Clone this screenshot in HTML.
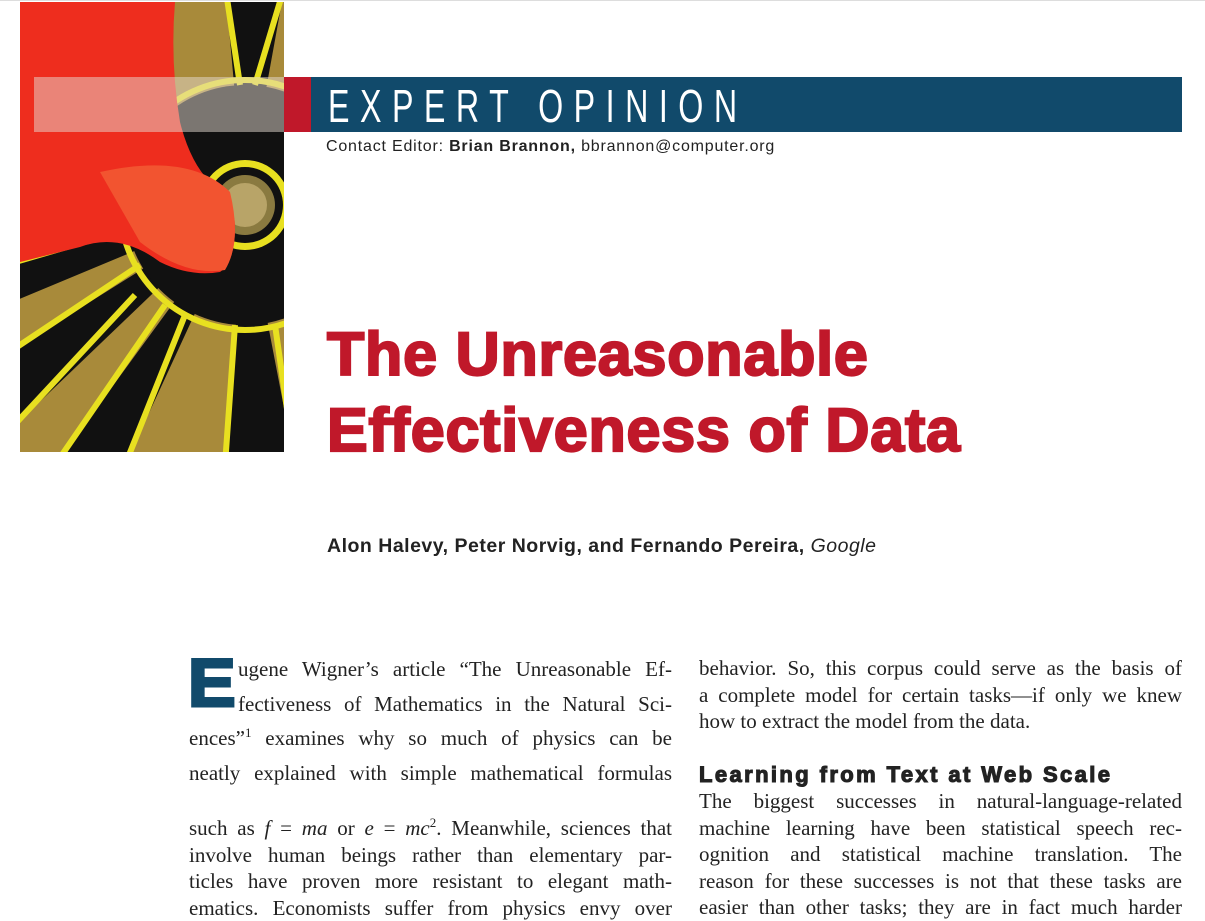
<!DOCTYPE html>
<html><head><meta charset="utf-8"><style>
body{margin:0;width:1205px;height:903px;overflow:hidden;background:#fff;position:relative;font-family:"Liberation Serif",serif;}
.abs{position:absolute}
.topline{left:0;top:0;width:1205px;height:1px;background:#ddd}
.bar{left:311px;top:77px;width:871px;height:55px;background:#114a6b}
.bartxt{left:328px;top:77px;color:#fff;font-family:"Liberation Sans",sans-serif;font-size:46px;letter-spacing:15px;line-height:58px;transform:scaleX(0.7);transform-origin:0 0;white-space:nowrap}
.red{left:284px;top:77px;width:27px;height:55px;background:#c0182a}
.glass{left:34px;top:77px;width:250px;height:55px;background:rgba(230,220,210,.5)}
.contact{left:326px;top:138px;font-family:"Liberation Sans",sans-serif;font-size:16px;letter-spacing:0.8px;color:#222}
.title{left:327px;top:316px;font-family:"Liberation Sans",sans-serif;font-weight:900;font-size:61px;line-height:76px;color:#c0182a;-webkit-text-stroke:2.2px #c0182a;letter-spacing:0.8px;white-space:nowrap}
.auth{left:327px;top:535px;font-family:"Liberation Sans",sans-serif;font-size:19.5px;letter-spacing:0.5px;font-weight:bold;color:#222}
.col{font-size:21px;color:#222;line-height:34.5px;width:483px;text-align:justify}
.col div{white-space:nowrap;text-align:justify;text-align-last:justify}
h3{font-family:"Liberation Sans",sans-serif;font-weight:900;font-size:22px;letter-spacing:2.4px;margin:0;color:#222;-webkit-text-stroke:1.1px #222}
</style></head><body>
<div class="abs topline"></div>
<svg class="abs" style="left:20px;top:2px" width="264" height="450" viewBox="0 0 264 450">
<defs><clipPath id="c"><rect width="264" height="450"/></clipPath></defs>
<g clip-path="url(#c)">
<rect width="264" height="450" fill="#a88a3a"/>
<g transform="translate(225,203)">
<path d="M0 0 L-20 -220 L40 -220 Z" fill="#111"/>
<path d="M0 0 L120 -150 L140 -60 Z" fill="#111"/>
<path d="M0 0 L-240 150 L-240 230 Z" fill="#111"/>
<path d="M0 0 L-190 260 L-120 260 Z" fill="#111"/>
<path d="M0 0 L-20 260 L50 260 Z" fill="#111"/>
<path d="M0 0 L-240 60 L-240 100 Z" fill="#111"/>
<circle r="125" fill="none" stroke="#e8e020" stroke-width="6"/>
<circle r="120" fill="#111"/>
<circle r="45" fill="#e8e020"/>
<circle r="38" fill="#111"/>
<path d="M-20 -220 L-5 -120 M40 -220 L10 -120 M120 -150 L80 -90 M140 -60 L110 -50 M-240 150 L-105 60 M-240 230 L-110 90 M-190 260 L-80 100 M-120 260 L-60 110 M-20 260 L-10 120 M50 260 L30 120 M-240 60 L-120 25" stroke="#e8e020" stroke-width="6" fill="none"/>
<circle r="30" fill="#8a7a40"/>
<circle r="22" fill="#b8a468"/>
</g>
<path d="M0 0 L155 0 Q150 60 160 120 Q170 160 190 180 Q215 200 215 225 Q215 260 200 270 Q170 275 140 260 Q100 230 60 245 Q20 255 0 260 Z" fill="#ee2d1e"/>
<path d="M80 170 Q170 150 210 190 Q222 240 205 268 Q165 275 120 240 Z" fill="#f25430"/>
</g>
</svg>
<div class="abs glass"></div>
<div class="abs red"></div>
<div class="abs bar"></div>
<div class="abs bartxt">EXPERT OPINION</div>
<div class="abs contact">Contact Editor: <b>Brian Brannon,</b> bbrannon@computer.org</div>
<div class="abs title">The Unreasonable<br>Effectiveness of Data</div>
<div class="abs auth">Alon Halevy, Peter Norvig, and Fernando Pereira, <i style="font-weight:normal">Google</i></div>
<div class="abs" style="left:188px;top:650px;color:#114a6b;font-family:'Liberation Sans',sans-serif;font-weight:900;font-size:68px;line-height:66px;-webkit-text-stroke:3px #114a6b;transform:scaleX(1.05);transform-origin:0 0">E</div>
<div class="abs col" style="left:189px;top:652px">
<div style="margin-left:49px">ugene Wigner’s article “The Unreasonable Ef-</div>
<div style="margin-left:49px">fectiveness of Mathematics in the Natural Sci-</div>
<div>ences”<sup style="font-size:13px;line-height:0">1</sup> examines why so much of physics can be</div>
<div>neatly explained with simple mathematical formulas</div>
</div>
<div class="abs col" style="left:189px;top:815px;line-height:26.5px">
<div>such as <i>f</i> = <i>ma</i> or <i>e</i> = <i>mc</i><sup style="font-size:13px;line-height:0">2</sup>. Meanwhile, sciences that</div>
<div>involve human beings rather than elementary par-</div>
<div>ticles have proven more resistant to elegant math-</div>
<div>ematics. Economists suffer from physics envy over</div>
</div>
<div class="abs col" style="left:699px;top:655px;line-height:26.5px">
<div>behavior. So, this corpus could serve as the basis of</div>
<div>a complete model for certain tasks—if only we knew</div>
<div style="text-align-last:left">how to extract the model from the data.</div>
</div>
<div class="abs" style="left:699px;top:762px"><h3>Learning from Text at Web Scale</h3></div>
<div class="abs col" style="left:699px;top:788px;line-height:26.5px">
<div>The biggest successes in natural-language-related</div>
<div>machine learning have been statistical speech rec-</div>
<div>ognition and statistical machine translation. The</div>
<div>reason for these successes is not that these tasks are</div>
<div>easier than other tasks; they are in fact much harder</div>
</div>
</body></html>
